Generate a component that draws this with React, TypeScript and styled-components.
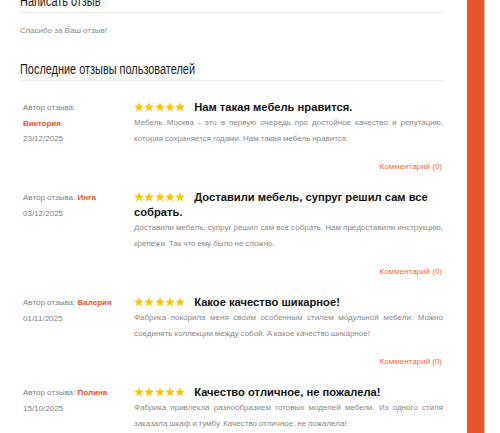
import React from "react";
import styled, { createGlobalStyle } from "styled-components";

const Global = createGlobalStyle`
  html, body { margin: 0; padding: 0; background: #fff; }
  body { font-family: "Liberation Sans", Arial, sans-serif; overflow: hidden; }
`;

const ORANGE = "#e8572a";

const Page = styled.div`
  display: flex;
  height: 433px;
  overflow: hidden;
`;

const Main = styled.main`
  width: 425px;
  margin-left: 20px;
  margin-top: -8px;
`;

const Side = styled.aside`
  margin-left: 22px;
  width: 17px;
  background: ${ORANGE};
  border-right: 1px solid #f6b59c;
  align-self: stretch;
`;

const Heading = styled.h2`
  margin: 0;
  font-family: "Liberation Sans", Arial, sans-serif;
  font-weight: 400;
  font-size: 14px;
  line-height: 18px;
  color: #1a1a1a;
  padding-bottom: 2px;
  border-bottom: 1px solid #eeeeee;
  white-space: nowrap;
`;

const Narrow = styled.span`
  display: inline-block;
  transform: scaleX(0.78);
  transform-origin: left center;
`;

const Thanks = styled.p`
  margin: 10px 0 21px;
  font-size: 8px;
  line-height: 16px;
  color: #888;
`;

const List = styled.div`
  margin-top: 19px;
  display: flex;
  flex-direction: column;
  gap: 15.5px;
`;

const Review = styled.article`
  display: flex;
  padding: 0 2px 0 3px;
`;

const Meta = styled.div`
  width: 89px;
  flex: none;
  margin-right: 22px;
  font-size: 8px;
  line-height: 15.5px;
  color: #808080;
`;

const Author = styled.span`
  color: ${ORANGE};
  font-weight: 700;
`;

const DateLine = styled.div``;

const Body = styled.div`
  flex: 1;
  min-width: 0;
`;

const Title = styled.h3`
  margin: 0;
  font-size: 11.2px;
  line-height: 15px;
  font-weight: 700;
  color: #111;
`;

const Stars = styled.span`
  display: inline-flex;
  gap: 0.3px;
  margin-right: 9px;
  vertical-align: -1px;
`;

const Text = styled.p`
  margin: 0;
  font-size: 8px;
  word-spacing: -0.4px;
  line-height: 16px;
  color: #888;
  text-align: justify;
`;

const CommentLink = styled.a`
  display: block;
  margin-top: 11.5px;
  text-align: right;
  font-size: 8px;
  line-height: 16px;
  color: #ef6a3e;
  text-decoration: none;
  padding-right: 1px;
`;

const Star = () => (
  <svg width="10" height="10" viewBox="0 0 24 23">
    <path
      d="M12 0l2.9 8.1 8.6.2-6.8 5.3 2.5 8.4L12 17l-7.2 5 2.5-8.4L.5 8.3l8.6-.2z"
      fill="#f8c300"
    />
  </svg>
);

type R = { name: string; date: string; title: string; text: string };

const reviews: R[] = [
  {
    name: "Виктория",
    date: "23/12/2025",
    title: "Нам такая мебель нравится.",
    text: "Мебель Москва - это в первую очередь про достойное качество и репутацию, которая сохраняется годами. Нам такая мебель нравится.",
  },
  {
    name: "Инга",
    date: "03/12/2025",
    title: "Доставили мебель, супруг решил сам все собрать.",
    text: "Доставили мебель, супруг решил сам все собрать. Нам предоставили инструкцию, крепежи. Так что ему было не сложно.",
  },
  {
    name: "Валерия",
    date: "01/11/2025",
    title: "Какое качество шикарное!",
    text: "Фабрика покорила меня своим особенным стилем модульной мебели. Можно соединять коллекции между собой. А какое качество шикарное!",
  },
  {
    name: "Полина",
    date: "15/10/2025",
    title: "Качество отличное, не пожалела!",
    text: "Фабрика привлекла разнообразием готовых моделей мебели. Из одного стиля заказала шкаф и тумбу. Качество отличное, не пожалела!",
  },
];

export default function App() {
  return (
    <>
      <Global />
      <Page>
        <Main>
          <Heading>
            <Narrow>Написать отзыв</Narrow>
          </Heading>
          <Thanks>Спасибо за Ваш отзыв!</Thanks>
          <Heading>
            <Narrow>Последние отзывы пользователей</Narrow>
          </Heading>
          <List>
            {reviews.map((r) => (
              <Review key={r.name}>
                <Meta>
                  <div>
                    Автор отзыва: <Author>{r.name}</Author>
                  </div>
                  <DateLine>{r.date}</DateLine>
                </Meta>
                <Body>
                  <Title>
                    <Stars>
                      <Star />
                      <Star />
                      <Star />
                      <Star />
                      <Star />
                    </Stars>
                    {r.title}
                  </Title>
                  <Text>{r.text}</Text>
                  <CommentLink href="#">Комментарий (0)</CommentLink>
                </Body>
              </Review>
            ))}
          </List>
        </Main>
        <Side />
      </Page>
    </>
  );
}
